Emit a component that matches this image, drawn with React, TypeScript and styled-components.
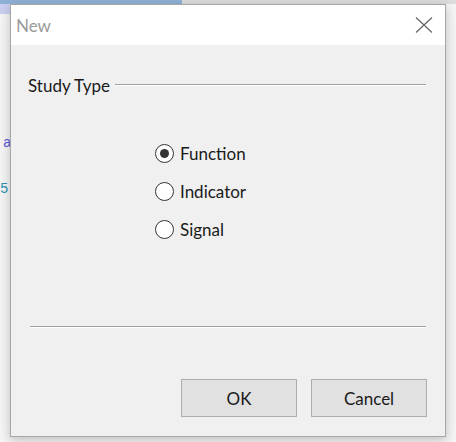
import React from "react";
import styled, { createGlobalStyle } from "styled-components";

const Global = createGlobalStyle`
  html, body { margin: 0; padding: 0; }
  body { width: 456px; height: 442px; overflow: hidden; background: #f3f3f3; }
`;

const Desktop = styled.div`
  position: relative;
  width: 456px;
  height: 442px;
  background: #f4f4f4;
  overflow: hidden;
`;

const Editor = styled.div`
  display: flex;
  flex-direction: column;
  font-family: "Liberation Mono", monospace;
  font-size: 14px;
`;

const SelectionTop = styled.div`
  display: flex;
  height: 4px;
`;

const SelBar = styled.div<{ $w: number; $c: string }>`
  width: ${(p) => p.$w}px;
  height: 4px;
  background: ${(p) => p.$c};
`;

const SelStub = styled.div`
  width: 10px;
  height: 10px;
  background: #c9cff0;
`;

const CodeLine = styled.div<{ $top: number; $color: string; $indent: number }>`
  margin-top: ${(p) => p.$top}px;
  height: 16px;
  line-height: 16px;
  padding-left: ${(p) => p.$indent}px;
  color: ${(p) => p.$color};
  white-space: pre;
`;

const Window = styled.div`
  position: absolute;
  left: 10px;
  top: 4px;
  width: 434px;
  height: 431px;
  border: 1px solid #a6a6a6;
  box-shadow: 0 3px 10px rgba(0, 0, 0, 0.22);
  display: flex;
  flex-direction: column;
  background: #f0f0f0;
  font-family: Lato, "Noto Sans", sans-serif;
  font-size: 17px;
  color: #1a1a1a;
`;

const TitleBar = styled.div`
  height: 40px;
  background: #ffffff;
  display: flex;
  align-items: center;
  justify-content: space-between;
  padding: 0 12px 0 5px;
`;

const Title = styled.span`
  color: #9a9a9a;
  font-size: 17px;
`;

const CloseButton = styled.div`
  width: 18px;
  height: 16px;
  display: flex;
  align-items: center;
  justify-content: center;
`;

const Body = styled.div`
  flex: 1;
  display: flex;
  flex-direction: column;
  padding: 30px 19px 0 17px;
`;

const GroupHeader = styled.div`
  display: flex;
  align-items: center;
  height: 20px;
  gap: 5px;
`;

const GroupLine = styled.div`
  flex: 1;
  height: 1px;
  background: #a0a0a0;
  border-bottom: 1px solid #ffffff;
  margin-top: -1px;
`;

const RadioList = styled.div`
  display: flex;
  flex-direction: column;
  gap: 18px;
  margin: 48px 0 0 127px;
`;

const RadioRow = styled.label`
  display: flex;
  align-items: center;
  gap: 6px;
  height: 20px;
`;

const RadioCircle = styled.span<{ $checked: boolean }>`
  width: 17px;
  height: 17px;
  border: 1px solid #333333;
  border-radius: 50%;
  background: #ffffff;
  display: flex;
  align-items: center;
  justify-content: center;
  &::after {
    content: "";
    width: 9px;
    height: 9px;
    border-radius: 50%;
    background: #333333;
    display: ${(p) => (p.$checked ? "block" : "none")};
  }
`;

const Separator = styled.div`
  margin: 87px 0 0 2px;
  height: 1px;
  background: #a0a0a0;
  border-bottom: 1px solid #ffffff;
`;

const ButtonRow = styled.div`
  display: flex;
  justify-content: flex-end;
  gap: 14px;
  margin: 51px -1px 0 0;
`;

const Button = styled.button`
  width: 116px;
  height: 38px;
  border: 1px solid #adadad;
  background: #e1e1e1;
  font-family: Lato, "Noto Sans", sans-serif;
  font-size: 17px;
  color: #1a1a1a;
  padding: 0;
`;

const options = [
  { label: "Function", checked: true },
  { label: "Indicator", checked: false },
  { label: "Signal", checked: false },
];

export default function App() {
  return (
    <>
      <Global />
      <Desktop>
        <Editor>
          <SelectionTop>
            <SelBar $w={182} $c="#8fb0d6" />
            <SelBar $w={274} $c="#dcdcdc" />
          </SelectionTop>
          <SelStub />
          <CodeLine $top={121} $color="#5b5bd6" $indent={3}>a</CodeLine>
          <CodeLine $top={30} $color="#2b91af" $indent={0}>5]</CodeLine>
        </Editor>
        <Window>
          <TitleBar>
            <Title>New</Title>
            <CloseButton>
              <svg width="18" height="16" viewBox="0 0 18 16">
                <path d="M1 0.5 L17 15.5 M17 0.5 L1 15.5" stroke="#666" strokeWidth="1.2" fill="none" />
              </svg>
            </CloseButton>
          </TitleBar>
          <Body>
            <GroupHeader>
              <span>Study Type</span>
              <GroupLine />
            </GroupHeader>
            <RadioList>
              {options.map((o) => (
                <RadioRow key={o.label}>
                  <RadioCircle $checked={o.checked} />
                  <span>{o.label}</span>
                </RadioRow>
              ))}
            </RadioList>
            <Separator />
            <ButtonRow>
              <Button>OK</Button>
              <Button>Cancel</Button>
            </ButtonRow>
          </Body>
        </Window>
      </Desktop>
    </>
  );
}
